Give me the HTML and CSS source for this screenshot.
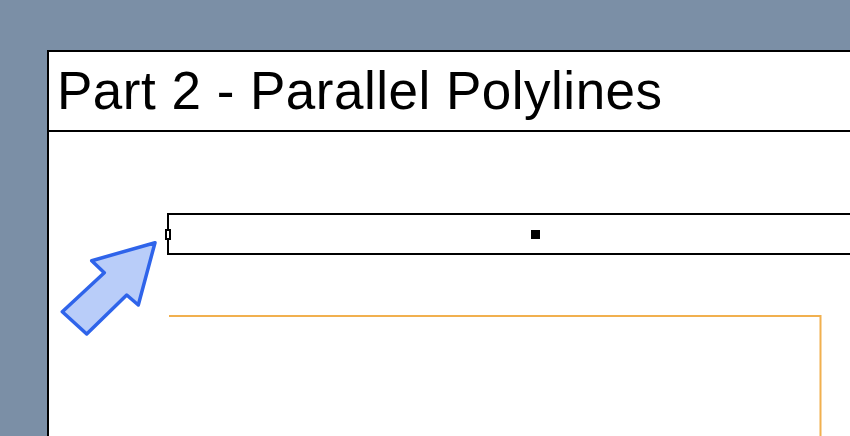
FILE: index.html
```html
<!DOCTYPE html>
<html lang="en">
<head>
    <meta charset="UTF-8">
    <link rel="stylesheet" href="styles.css">
    <title>Parallel Polylines</title>
</head>
<body>
    <div class="sheet">
        <header class="sheet-title">
            <h1>Part 2 - Parallel Polylines</h1>
        </header>

        <svg class="canvas" width="801" height="304" viewBox="49 132 801 304">
            <!-- source polyline box -->
            <rect x="168" y="214" width="800" height="40" fill="none" stroke="#000" stroke-width="2"/>
            <rect x="531" y="230" width="9" height="9" fill="#000"/>
            <rect x="166" y="230" width="4" height="9" fill="#fff" stroke="#000" stroke-width="2"/>

            <!-- parallel result -->
            <polyline points="169,316 820.5,316 820.5,440" fill="none" stroke="#f1b04f" stroke-width="2"/>

            <!-- pointer -->
            <polygon class="pointer" points="155,242.7 91.7,260.7 104.3,272.7 62.3,311.7 86.7,334 126.7,295 138.3,305"/>
        </svg>
    </div>
</body>
</html>
```

FILE: styles.css
```css
html, body {
    margin: 0;
    padding: 0;
    height: 100%;
    overflow: hidden;
}

body {
    background-color: #7b8fa6;
    font-family: 'Liberation Sans', Arial, sans-serif;
}

.sheet {
    margin: 50px 0 0 47px;
    width: 1000px;
    height: 600px;
    border: 2px solid #000;
    background-color: #fff;
}

.sheet-title {
    border-bottom: 2px solid #000;
    padding: 13px 8px;
}

.sheet-title h1 {
    margin: 0;
    font-size: 53px;
    font-weight: normal;
    line-height: 52px;
    letter-spacing: 0.5px;
    color: #000;
    height: 52px;
}

.canvas {
    display: block;
}

.pointer {
    fill: #b9cdf9;
    stroke: #2f64ea;
    stroke-width: 3.5;
    stroke-linejoin: round;
}
```
